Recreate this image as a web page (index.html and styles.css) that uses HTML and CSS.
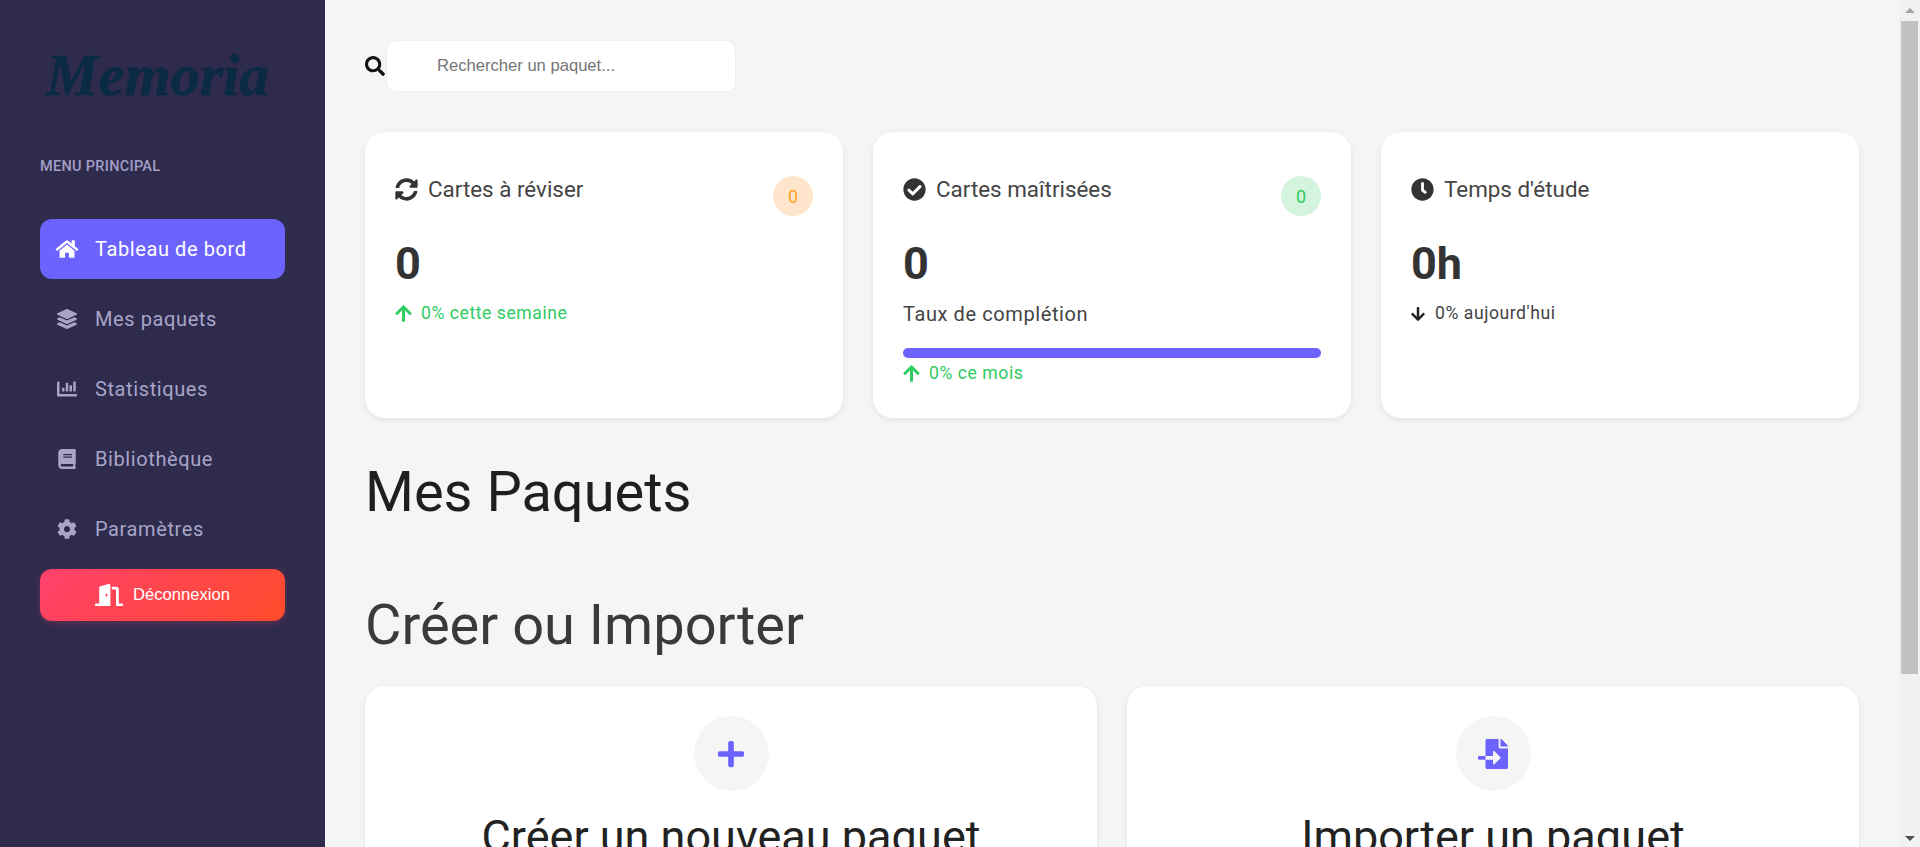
FILE: index.html
```html
<!DOCTYPE html>
<html lang="fr">

<head>
    <title>Memoria</title>
    <meta charset="utf-8">
    <link rel="stylesheet" href="styles.css">
</head>

<body>
    <aside class="sidebar">
        <div class="logo">Memoria</div>
        <div class="menu-label">MENU PRINCIPAL</div>
        <nav class="menu">
            <a class="menu-item active">
                <svg class="menu-icon" viewBox="0 0 576 512"><path d="M280.37 148.26L96 300.11V464a16 16 0 0 0 16 16l112.06-.29a16 16 0 0 0 15.92-16V368a16 16 0 0 1 16-16h64a16 16 0 0 1 16 16v95.64a16 16 0 0 0 16 16.05L464 480a16 16 0 0 0 16-16V300L295.67 148.26a12.19 12.19 0 0 0-15.3 0zM571.6 251.47L488 182.56V44.05a12 12 0 0 0-12-12h-56a12 12 0 0 0-12 12v72.61L318.47 43a48 48 0 0 0-61 0L4.34 251.47a12 12 0 0 0-1.6 16.9l25.5 31A12 12 0 0 0 45.15 301l235.22-193.74a12.19 12.19 0 0 1 15.3 0L530.9 301a12 12 0 0 0 16.9-1.6l25.5-31a12 12 0 0 0-1.7-16.93z"/></svg>
                Tableau de bord
            </a>
            <a class="menu-item">
                <svg class="menu-icon" viewBox="0 0 512 512"><path d="M12.41 148.02l232.94 105.67c6.8 3.09 14.49 3.09 21.29 0l232.94-105.67c16.55-7.51 16.55-32.52 0-40.03L266.65 2.31a25.607 25.607 0 0 0-21.29 0L12.41 107.98c-16.55 7.51-16.55 32.53 0 40.04zm487.18 88.28l-58.09-26.33-161.64 73.27c-7.56 3.43-15.59 5.17-23.86 5.17s-16.29-1.74-23.86-5.17L70.51 209.97l-58.1 26.33c-16.55 7.5-16.55 32.5 0 40l232.94 105.59c6.8 3.08 14.49 3.08 21.29 0L499.59 276.3c16.55-7.5 16.55-32.5 0-40zm0 127.8l-57.87-26.23-161.86 73.37c-7.56 3.43-15.59 5.17-23.86 5.17s-16.29-1.74-23.86-5.17L70.29 337.87 12.41 364.1c-16.55 7.5-16.55 32.5 0 40l232.94 105.59c6.8 3.08 14.49 3.08 21.29 0L499.59 404.1c16.55-7.5 16.55-32.5 0-40z"/></svg>
                Mes paquets
            </a>
            <a class="menu-item">
                <svg class="menu-icon" viewBox="0 0 512 512"><path d="M332.8 320h38.4c6.4 0 12.8-6.4 12.8-12.8V172.8c0-6.4-6.4-12.8-12.8-12.8h-38.4c-6.4 0-12.8 6.4-12.8 12.8v134.4c0 6.4 6.4 12.8 12.8 12.8zm96 0h38.4c6.4 0 12.8-6.4 12.8-12.8V76.8c0-6.4-6.4-12.8-12.8-12.8h-38.4c-6.4 0-12.8 6.4-12.8 12.8v230.4c0 6.4 6.4 12.8 12.8 12.8zm-288 0h38.4c6.4 0 12.8-6.4 12.8-12.8v-70.4c0-6.4-6.4-12.8-12.8-12.8h-38.4c-6.4 0-12.8 6.4-12.8 12.8v70.4c0 6.4 6.4 12.8 12.8 12.8zm96 0h38.4c6.4 0 12.8-6.4 12.8-12.8V108.8c0-6.4-6.4-12.8-12.8-12.8h-38.4c-6.4 0-12.8 6.4-12.8 12.8v198.4c0 6.4 6.4 12.8 12.8 12.8zM496 384H64V80c0-8.84-7.16-16-16-16H16C7.16 64 0 71.16 0 80v336c0 17.67 14.33 32 32 32h464c8.84 0 16-7.16 16-16v-32c0-8.84-7.16-16-16-16z"/></svg>
                Statistiques
            </a>
            <a class="menu-item">
                <svg class="menu-icon" viewBox="0 0 448 512"><path d="M448 360V24c0-13.3-10.7-24-24-24H96C43 0 0 43 0 96v320c0 53 43 96 96 96h328c13.3 0 24-10.7 24-24v-16c0-7.5-3.5-14.3-8.9-18.7-4.2-15.4-4.2-59.3 0-74.7 5.4-4.3 8.9-11.1 8.9-18.6zM128 134c0-3.3 2.7-6 6-6h212c3.3 0 6 2.7 6 6v20c0 3.3-2.7 6-6 6H134c-3.3 0-6-2.7-6-6v-20zm0 64c0-3.3 2.7-6 6-6h212c3.3 0 6 2.7 6 6v20c0 3.3-2.7 6-6 6H134c-3.3 0-6-2.7-6-6v-20zm253.4 250H96c-17.7 0-32-14.3-32-32 0-17.6 14.4-32 32-32h285.4c-1.9 17.1-1.9 46.9 0 64z"/></svg>
                Bibliothèque
            </a>
            <a class="menu-item">
                <svg class="menu-icon" viewBox="0 0 512 512"><path d="M487.4 315.7l-42.6-24.6c4.3-23.2 4.3-47 0-70.2l42.6-24.6c4.9-2.8 7.1-8.6 5.5-14-11.1-35.6-30-67.8-54.7-94.6-3.8-4.1-10-5.1-14.8-2.3L380.8 110c-17.9-15.4-38.5-27.3-60.8-35.1V25.8c0-5.6-3.9-10.5-9.4-11.7-36.7-8.2-74.3-7.8-109.2 0-5.5 1.2-9.4 6.1-9.4 11.7V75c-22.2 7.9-42.8 19.8-60.8 35.1L88.7 85.5c-4.9-2.8-11-1.9-14.8 2.3-24.7 26.7-43.6 58.9-54.7 94.6-1.7 5.4.6 11.2 5.5 14L67.3 221c-4.3 23.2-4.3 47 0 70.2l-42.6 24.6c-4.9 2.8-7.1 8.6-5.5 14 11.1 35.6 30 67.8 54.7 94.6 3.8 4.1 10 5.1 14.8 2.3l42.6-24.6c17.9 15.4 38.5 27.3 60.8 35.1v49.2c0 5.6 3.9 10.5 9.4 11.7 36.7 8.2 74.3 7.8 109.2 0 5.5-1.2 9.4-6.1 9.4-11.7v-49.2c22.2-7.9 42.8-19.8 60.8-35.1l42.6 24.6c4.9 2.8 11 1.9 14.8-2.3 24.7-26.7 43.6-58.9 54.7-94.6 1.5-5.5-.7-11.3-5.6-14.1zM256 336c-44.1 0-80-35.9-80-80s35.9-80 80-80 80 35.9 80 80-35.9 80-80 80z"/></svg>
                Paramètres
            </a>
        </nav>
        <button class="logout">
            <svg class="logout-icon" viewBox="0 0 640 512"><path d="M624 448h-80V113.45C544 86.19 522.47 64 496 64H384v64h96v384h144c8.84 0 16-7.16 16-16v-32c0-8.84-7.16-16-16-16zM312.24 1.01l-192 49.74C105.99 54.44 96 67.7 96 82.92V448H16c-8.84 0-16 7.16-16 16v32c0 8.84 7.16 16 16 16h336V33.18c0-21.58-19.56-37.41-39.76-32.17zM264 288c-13.25 0-24-14.33-24-32s10.75-32 24-32 24 14.33 24 32-10.75 32-24 32z"/></svg>
            Déconnexion
        </button>
    </aside>

    <main class="content">
        <div class="search">
            <svg class="search-icon" viewBox="0 0 512 512"><path d="M505 442.7L405.3 343c-4.5-4.5-10.6-7-17-7H372c27.6-35.3 44-79.7 44-128C416 93.1 322.9 0 208 0S0 93.1 0 208s93.1 208 208 208c48.3 0 92.7-16.4 128-44v16.3c0 6.4 2.5 12.5 7 17l99.7 99.7c9.4 9.4 24.6 9.4 33.9 0l28.3-28.3c9.4-9.4 9.4-24.6.1-34zM208 336c-70.7 0-128-57.2-128-128 0-70.7 57.2-128 128-128 70.7 0 128 57.2 128 128 0 70.7-57.2 128-128 128z"/></svg>
            <input class="search-input" type="text" placeholder="Rechercher un paquet...">
        </div>

        <section class="stats">
            <div class="stat-card">
                <div class="stat-head">
                    <h3 class="stat-title">
                        <svg class="stat-icon" viewBox="0 0 512 512"><path d="M370.72 133.28C339.458 104.008 298.888 87.962 255.848 88c-77.458.068-144.328 53.178-162.791 126.85-1.344 5.363-6.122 9.15-11.651 9.15H24.103c-7.498 0-13.194-6.807-11.807-14.176C33.933 94.924 134.813 8 256 8c66.448 0 126.791 26.136 171.315 68.685L463.03 40.97C478.149 25.851 504 36.559 504 57.941V192c0 13.255-10.745 24-24 24H345.941c-21.382 0-32.09-25.851-16.971-40.971l41.75-41.749zM32 296h134.059c21.382 0 32.09 25.851 16.971 40.971l-41.75 41.75c31.262 29.273 71.835 45.319 114.876 45.28 77.418-.07 144.315-53.144 162.787-126.849 1.344-5.363 6.122-9.15 11.651-9.15h57.304c7.498 0 13.194 6.807 11.807 14.176C478.067 417.076 377.187 504 256 504c-66.448 0-126.791-26.136-171.315-68.685L48.97 471.03C33.851 486.149 8 475.441 8 454.059V320c0-13.255 10.745-24 24-24z"/></svg>
                        Cartes à réviser
                    </h3>
                    <span class="badge orange">0</span>
                </div>
                <div class="stat-value">0</div>
                <div class="trend up">
                    <svg class="trend-icon" viewBox="0 0 448 512"><path d="M34.9 289.5l-22.2-22.2c-9.4-9.4-9.4-24.6 0-33.9L207 39c9.4-9.4 24.6-9.4 33.9 0l194.3 194.3c9.4 9.4 9.4 24.6 0 33.9L413 289.4c-9.5 9.5-25 9.3-34.3-.4L264 168.6V456c0 13.3-10.7 24-24 24h-32c-13.3 0-24-10.7-24-24V168.6L69.2 289.1c-9.3 9.8-24.8 10-34.3.4z"/></svg>
                    0% cette semaine
                </div>
            </div>

            <div class="stat-card">
                <div class="stat-head">
                    <h3 class="stat-title">
                        <svg class="stat-icon" viewBox="0 0 512 512"><path d="M504 256c0 136.967-111.033 248-248 248S8 392.967 8 256 119.033 8 256 8s248 111.033 248 248zM227.314 387.314l184-184c6.248-6.248 6.248-16.379 0-22.627l-22.627-22.627c-6.248-6.249-16.379-6.249-22.628 0L216 308.118l-70.059-70.059c-6.248-6.248-16.379-6.248-22.628 0l-22.627 22.627c-6.248 6.248-6.248 16.379 0 22.627l104 104c6.249 6.249 16.379 6.249 22.628.001z"/></svg>
                        Cartes maîtrisées
                    </h3>
                    <span class="badge green">0</span>
                </div>
                <div class="stat-value">0</div>
                <div class="stat-label">Taux de complétion</div>
                <div class="progress"></div>
                <div class="trend up tight">
                    <svg class="trend-icon" viewBox="0 0 448 512"><path d="M34.9 289.5l-22.2-22.2c-9.4-9.4-9.4-24.6 0-33.9L207 39c9.4-9.4 24.6-9.4 33.9 0l194.3 194.3c9.4 9.4 9.4 24.6 0 33.9L413 289.4c-9.5 9.5-25 9.3-34.3-.4L264 168.6V456c0 13.3-10.7 24-24 24h-32c-13.3 0-24-10.7-24-24V168.6L69.2 289.1c-9.3 9.8-24.8 10-34.3.4z"/></svg>
                    0% ce mois
                </div>
            </div>

            <div class="stat-card">
                <div class="stat-head">
                    <h3 class="stat-title">
                        <svg class="stat-icon" viewBox="0 0 512 512"><path d="M256,8C119,8,8,119,8,256S119,504,256,504,504,393,504,256,393,8,256,8Zm92.49,313h0l-20,25a16,16,0,0,1-22.49,2.5h0l-67-49.72a40,40,0,0,1-15-31.23V112a16,16,0,0,1,16-16h32a16,16,0,0,1,16,16V256l58,42.5A16,16,0,0,1,348.49,321Z"/></svg>
                        Temps d'étude
                    </h3>
                </div>
                <div class="stat-value">0h</div>
                <div class="trend down">
                    <svg class="trend-icon" viewBox="0 0 448 512"><path d="M413.1 222.5l22.2 22.2c9.4 9.4 9.4 24.6 0 33.9L241 473c-9.4 9.4-24.6 9.4-33.9 0L12.7 278.6c-9.4-9.4-9.4-24.6 0-33.9l22.2-22.2c9.5-9.5 25-9.3 34.3.4L184 343.4V56c0-13.3 10.7-24 24-24h32c13.3 0 24 10.7 24 24v287.4l114.8-120.5c9.3-9.8 24.8-10 34.3-.4z"/></svg>
                    0% aujourd'hui
                </div>
            </div>
        </section>

        <h1 class="page-title">Mes Paquets</h1>
        <h2 class="section-title">Créer ou Importer</h2>

        <section class="actions">
            <div class="action-card">
                <div class="action-circle">
                    <svg class="action-icon" viewBox="0 0 448 512"><path d="M416 208H272V64c0-17.67-14.33-32-32-32h-32c-17.67 0-32 14.33-32 32v144H32c-17.67 0-32 14.33-32 32v32c0 17.67 14.33 32 32 32h144v144c0 17.67 14.33 32 32 32h32c17.67 0 32-14.33 32-32V304h144c17.67 0 32-14.33 32-32v-32c0-17.67-14.33-32-32-32z"/></svg>
                </div>
                <h3 class="action-title">Créer un nouveau paquet</h3>
            </div>
            <div class="action-card">
                <div class="action-circle">
                    <svg class="action-icon" viewBox="0 0 512 512"><path d="M16 288c-8.8 0-16 7.2-16 16v32c0 8.8 7.2 16 16 16h112v-64H16zm336-152V0H152c-13.3 0-24 10.7-24 24v264h127.99v-65.18c0-14.28 17.29-21.41 27.36-11.27l95.7 96.43c6.6 6.65 6.6 17.39 0 24.04l-95.7 96.42c-10.06 10.14-27.36 3.01-27.36-11.27V352H128v136c0 13.3 10.7 24 24 24h336c13.3 0 24-10.7 24-24V160H376c-13.2 0-24-10.8-24-24zm153-31L407.1 7c-4.5-4.5-10.6-7-17-7H384v128h128v-6.1c0-6.3-2.5-12.4-7-16.9z"/></svg>
                </div>
                <h3 class="action-title">Importer un paquet</h3>
            </div>
        </section>
    </main>

    <div class="scrollbar">
        <div class="scroll-btn"><span class="arrow-up"></span></div>
        <div class="scroll-thumb"></div>
        <div class="scroll-btn"><span class="arrow-down"></span></div>
    </div>
</body>

</html>
```

FILE: styles.css
```css
* {
    box-sizing: border-box;
}

body {
    margin: 0;
    display: flex;
    height: 100vh;
    overflow: hidden;
    background-color: #f5f5f5;
    font-family: Roboto, sans-serif;
    color: #333;
}

/* sidebar */
.sidebar {
    width: 325px;
    flex-shrink: 0;
    padding: 40px;
    background-color: #2f2b4c;
}

.logo {
    height: 72px;
    margin-left: 6px;
    font-family: "Liberation Serif", serif;
    font-size: 59px;
    font-weight: bold;
    font-style: italic;
    line-height: 70px;
    color: #0b2a45;
    white-space: nowrap;
    -webkit-text-stroke: 0.6px #0b2a45;
}

.menu-label {
    margin-top: 43px;
    font-size: 14.5px;
    font-weight: 500;
    letter-spacing: 0.3px;
    line-height: 24px;
    color: #a29fc6;
}

.menu {
    margin-top: 40px;
}

.menu-item {
    display: flex;
    align-items: center;
    height: 60px;
    margin-bottom: 10px;
    padding-left: 15px;
    border-radius: 12px;
    font-size: 20px;
    letter-spacing: 0.6px;
    color: #a8a5c9;
}

.menu-item.active {
    background-color: #6c63ff;
    color: #fff;
}

.menu-icon {
    width: 24px;
    height: 20px;
    margin-right: 16px;
    fill: currentColor;
}

.logout {
    display: flex;
    align-items: center;
    justify-content: center;
    gap: 10px;
    width: 100%;
    height: 52px;
    padding: 0;
    border: none;
    border-radius: 12px;
    background: linear-gradient(135deg, #ff416c, #ff4b2b);
    box-shadow: 0 2px 6px rgba(255, 65, 108, 0.25);
    font-family: "Liberation Sans", sans-serif;
    font-size: 16.6px;
    color: #fff;
}

.logout-icon {
    width: 28px;
    height: 22.4px;
    fill: currentColor;
}

/* main content */
.content {
    flex: 1;
    min-width: 0;
    padding: 40px 40px 60px;
}

.search {
    display: flex;
    align-items: center;
    gap: 1px;
    margin-bottom: 40px;
}

.search-icon {
    width: 20px;
    height: 20px;
    fill: #111;
}

.search-input {
    width: 350px;
    height: 52px;
    padding: 0 50px;
    border: 1px solid #f0f0f0;
    border-radius: 10px;
    background-color: #fff;
    font-family: "Liberation Sans", sans-serif;
    font-size: 16.6px;
}

.search-input::placeholder {
    color: #757575;
}

.stats {
    display: grid;
    grid-template-columns: repeat(3, 1fr);
    gap: 30px;
    height: 286px;
}

.stat-card {
    padding: 30px;
    border-radius: 20px;
    background-color: #fff;
    box-shadow: 0 2px 6px rgba(0, 0, 0, 0.08);
}

.stat-head {
    display: flex;
    justify-content: space-between;
    align-items: flex-start;
    height: 64px;
    padding-top: 11px;
}

.stat-title {
    display: flex;
    align-items: center;
    gap: 10px;
    margin: 0;
    font-size: 22.4px;
    font-weight: 400;
    line-height: 33px;
    color: #444;
}

.stat-icon {
    width: 23px;
    height: 23px;
    fill: #333;
}

.badge {
    display: flex;
    align-items: center;
    justify-content: center;
    width: 40px;
    height: 40px;
    margin-top: 3px;
    border-radius: 50%;
    font-size: 18px;
}

.badge.orange {
    background-color: #ffe5cc;
    color: #ff9f1c;
}

.badge.green {
    background-color: #d4f4dd;
    color: #2ecc5f;
}

.stat-value {
    margin-top: 11px;
    font-size: 45px;
    font-weight: 700;
    line-height: 54px;
    color: #333;
}

.stat-label {
    margin-top: 10px;
    font-size: 20px;
    letter-spacing: 0.6px;
    line-height: 27px;
    color: #444;
}

.progress {
    height: 10px;
    margin-top: 20px;
    border-radius: 5px;
    background-color: #6c63ff;
}

.trend {
    display: flex;
    align-items: center;
    gap: 9px;
    margin-top: 9px;
    font-size: 17.6px;
    letter-spacing: 0.55px;
    line-height: 27px;
}

.trend.tight {
    margin-top: 2px;
}

.trend.up {
    color: #2ecc5f;
}

.trend.down {
    gap: 10px;
    color: #444;
}

.trend-icon {
    width: 17px;
    height: 19px;
    fill: currentColor;
}

.trend.down .trend-icon {
    width: 14px;
    height: 16px;
    fill: #222;
}

.page-title {
    margin: 40px 0 0;
    font-size: 56px;
    font-weight: 400;
    line-height: 68px;
    color: #1f1f1f;
}

.section-title {
    margin: 65px 0 0;
    font-size: 56px;
    font-weight: 400;
    line-height: 68px;
    color: #3a3a3a;
}

.actions {
    display: grid;
    grid-template-columns: repeat(2, 1fr);
    gap: 30px;
    margin-top: 27px;
}

.action-card {
    padding: 30px;
    border-radius: 20px;
    background-color: #fff;
    box-shadow: 0 2px 6px rgba(0, 0, 0, 0.08);
    text-align: center;
}

.action-circle {
    display: flex;
    align-items: center;
    justify-content: center;
    width: 75px;
    height: 75px;
    margin: 0 auto;
    border-radius: 50%;
    background-color: #f5f5f5;
}

.action-icon {
    width: 30px;
    height: 30px;
    fill: #6c63ff;
}

.action-title {
    margin: 19px 0 60px;
    font-size: 45px;
    font-weight: 400;
    line-height: 54px;
    color: #222;
}

/* window scrollbar, the screenshot shows one */
.scrollbar {
    display: flex;
    flex-direction: column;
    justify-content: space-between;
    width: 21px;
    flex-shrink: 0;
    background-color: #f1f1f1;
}

.scroll-btn {
    display: flex;
    align-items: center;
    justify-content: center;
    height: 21px;
}

.scroll-thumb {
    flex: none;
    height: 653px;
    margin: 0 2px 153px;
    background-color: #c1c1c1;
}

.arrow-up {
    border-left: 5px solid transparent;
    border-right: 5px solid transparent;
    border-bottom: 5px solid #a3a3a3;
}

.arrow-down {
    margin-top: 4px;
    border-left: 5px solid transparent;
    border-right: 5px solid transparent;
    border-top: 5px solid #505050;
}
```
